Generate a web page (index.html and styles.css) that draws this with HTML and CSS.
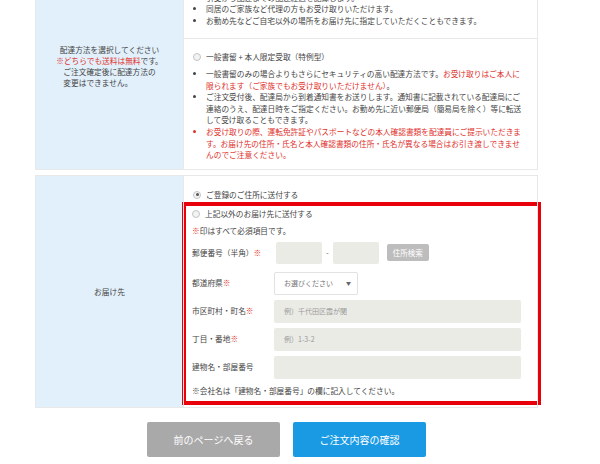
FILE: index.html
```html
<!DOCTYPE html>
<html lang="ja">
<head>
  <meta charset="UTF-8" />
  <meta name="viewport" content="width=device-width, initial-scale=1.0"/>
  <title>配達方法・お届け先</title>
  <link rel="stylesheet" href="styles.css">
</head>
<body>
  <div class="container">
    <table class="form-table">
      <tr>
        <th rowspan="2">
          配達方法を選択してください<br>
          <span class="red">※どちらでも送料は無料</span>です。<br>
          <span class="th-note">ご注文確定後に配達方法の<br>変更はできません。</span>
        </th>
        <td class="option first">
          <label class="radio"><input type="radio" name="delivery" checked> 一般書留</label>
          <ul>
            <li>引受から配達までの配達経過を記録します。</li>
            <li>同居のご家族など代理の方もお受け取りいただけます。</li>
            <li>お勤め先などご自宅以外の場所をお届け先に指定していただくこともできます。</li>
          </ul>
        </td>
      </tr>
      <tr>
        <td class="option">
          <label class="radio"><input type="radio" name="delivery"> 一般書留 + 本人限定受取（特例型）</label>
          <ul>
            <li>一般書留のみの場合よりもさらにセキュリティの高い配達方法です。<span class="red">お受け取りはご本人に限られます（ご家族でもお受け取りいただけません）</span>。</li>
            <li>ご注文受付後、配達局から到着通知書をお送りします。通知書に記載されている配達局にご連絡のうえ、配達日時をご指定ください。お勤め先に近い郵便局（簡易局を除く）等に転送して受け取ることもできます。</li>
            <li class="red">お受け取りの際、運転免許証やパスポートなどの本人確認書類を配達員にご提示いただきます。お届け先の住所・氏名と本人確認書類の住所・氏名が異なる場合はお引き渡しできませんのでご注意ください。</li>
          </ul>
        </td>
      </tr>
    </table>

    <table class="form-table">
      <tr>
        <th class="middle">お届け先</th>
        <td class="address">
          <label class="radio own"><input type="radio" name="address" checked> ご登録のご住所に送付する</label>
          <div class="other-address">
            <label class="radio"><input type="radio" name="address"> 上記以外のお届け先に送付する</label>
            <p class="required"><span class="red">※</span>印はすべて必須項目です。</p>

            <div class="addr-row">
              <span>郵便番号（半角）<span class="red">※</span></span>
              <div class="zip">
                <input type="text" class="zip-input">
                <span class="dash">-</span>
                <input type="text" class="zip-input">
                <button class="search-btn">住所検索</button>
              </div>
            </div>

            <div class="addr-row pref">
              <span>都道府県<span class="red">※</span></span>
              <div class="select-box">
                <select>
                  <option>お選びください</option>
                </select>
              </div>
            </div>

            <div class="addr-row">
              <span>市区町村・町名<span class="red">※</span></span>
              <input type="text" class="text-input" placeholder="例）千代田区霞が関">
            </div>

            <div class="addr-row">
              <span>丁目・番地<span class="red">※</span></span>
              <input type="text" class="text-input" placeholder="例）1-3-2">
            </div>

            <div class="addr-row">
              <span>建物名・部屋番号</span>
              <input type="text" class="text-input">
            </div>

            <p class="company-note">※会社名は「建物名・部屋番号」の欄に記入してください。</p>
          </div>
        </td>
      </tr>
    </table>

    <div class="actions">
      <button class="btn btn-back">前のページへ戻る</button>
      <button class="btn btn-confirm">ご注文内容の確認</button>
    </div>
  </div>
</body>
</html>
```

FILE: styles.css
```css
body {
  margin: 0;
  font-family: "Noto Sans CJK JP", sans-serif;
  font-size: 7.7px;
  line-height: 11.6px;
  color: #444;
  background: #fff;
}

.container {
  width: 503px;
  margin: -38px 0 0 35px;
}

.red {
  color: #e0302b;
}

.form-table {
  width: 100%;
  border-collapse: collapse;
  margin-bottom: 5px;
}

.form-table th {
  width: 147px;
  padding: 0;
  background: #e2f0fb;
  font-weight: normal;
  text-align: center;
  border: 1px solid #e8e8e8;
  line-height: 11px;
}

.form-table td {
  padding: 0;
  border: 1px solid #e8e8e8;
  vertical-align: top;
}

.th-note {
  display: inline-block;
  text-align: left;
}

.option {
  padding: 12px 14px 8px 9px !important;
}

.option.first {
  padding-bottom: 12px !important;
}

.radio {
  display: flex;
  align-items: center;
  gap: 5px;
}

.radio input {
  appearance: none;
  width: 8px;
  height: 8px;
  margin: 0;
  border: 1px solid #c4c4c4;
  border-radius: 50%;
  background: #f3f3f3;
  position: relative;
}

.radio input:checked::after {
  content: "";
  position: absolute;
  left: 1.5px;
  top: 1.5px;
  width: 3px;
  height: 3px;
  border-radius: 50%;
  background: #555;
}

.option ul {
  margin: 5px 0 0;
  padding-left: 13px;
}

.address {
  padding: 13px 0 2px 0 !important;
}

.radio.own {
  padding-left: 9px;
}

.other-address {
  margin: 2px -4px 0 -2px;
  border: 4px solid #e8000b;
  padding: 2px 16px 5px 6px;
}

.required {
  margin: 5px 0 0;
}

.addr-row {
  display: grid;
  grid-template-columns: 82px 1fr;
  align-items: center;
  margin-top: 5px;
}

.addr-row.pref {
  margin-top: 8px;
}

.zip {
  display: flex;
  align-items: center;
  padding-left: 2px;
}

.zip-input {
  width: 46px;
  height: 22px;
  box-sizing: border-box;
  border: none;
  border-radius: 2px;
  background: #ebebe6;
}

.dash {
  margin: 0 4px;
  color: #666;
}

.search-btn {
  margin-left: 8px;
  width: 42px;
  height: 17px;
  padding: 0;
  border: none;
  border-radius: 2px;
  background: #bdbdbd;
  color: #fff;
  font-family: inherit;
  font-size: 7.5px;
}

.select-box {
  position: relative;
  width: 84px;
}

.select-box::after {
  content: "▼";
  position: absolute;
  right: 7px;
  top: 8px;
  font-size: 5px;
  line-height: 6px;
  color: #666;
}

.select-box select {
  appearance: none;
  width: 84px;
  height: 23px;
  padding: 0 0 0 9px;
  border: 1px solid #e2e2e2;
  border-radius: 2px;
  background: #fff;
  color: #777;
  font-family: inherit;
  font-size: 7px;
}

.text-input {
  height: 23px;
  box-sizing: border-box;
  border: none;
  border-radius: 2px;
  background: #ebebe6;
  padding: 0 10px;
  font-family: inherit;
  font-size: 7px;
}

.text-input::placeholder {
  color: #9a9a9a;
}

.company-note {
  margin: 6px 0 0;
}

.actions {
  display: flex;
  justify-content: center;
  gap: 13px;
  margin-top: 14px;
}

.btn {
  width: 133px;
  height: 35px;
  border: none;
  border-radius: 2px;
  color: #fff;
  font-family: inherit;
  font-size: 10px;
}

.btn-back {
  background: #a9a9a9;
}

.btn-confirm {
  background: #1b9ae4;
}
```
